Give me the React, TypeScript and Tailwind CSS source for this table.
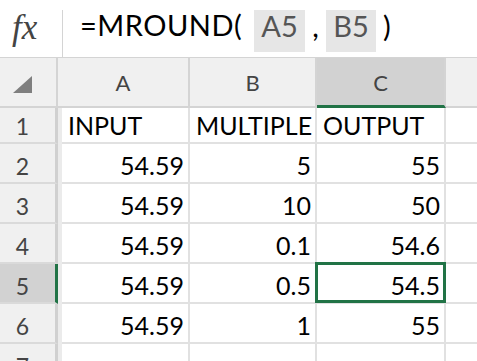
import React from "react";

const G = "border-[#e1e1e1]";

function RowHead({ n, sel }: { n: number; sel?: boolean }) {
  return (
    <div
      className={
        "w-[58px] shrink-0 flex items-end justify-center pr-[10px] pb-[4px] leading-none text-[23px] text-[#444] border-b-2 border-b-[#dadada] border-r-[3px] " +
        (sel ? "bg-[#d2d2d2] border-r-[#217346]" : "bg-[#f0f0f0] border-r-[#d0d0d0]")
      }
    >
      {n}
    </div>
  );
}

function Cell({ w, v, left, children }: { w: string; v?: string; left?: boolean; children?: React.ReactNode }) {
  return (
    <div
      className={
        "relative shrink-0 flex items-end leading-none text-[25px] text-black pb-[4px] border-r-2 border-b-2 " +
        G +
        " " +
        w +
        (left ? " justify-start pl-[6px]" : " justify-end pr-[4px]")
      }
    >
      {v}
      {children}
    </div>
  );
}

const rows: [number, string, string, string, boolean][] = [
  [2, "54.59", "5", "55", false],
  [3, "54.59", "10", "50", false],
  [4, "54.59", "0.1", "54.6", false],
  [5, "54.59", "0.5", "54.5", true],
  [6, "54.59", "1", "55", false],
];

export default function App() {
  return (
    <div className="w-[477px] h-[361px] overflow-hidden bg-white font-['Lato',sans-serif]">
      {/* formula bar */}
      <div className="flex h-[58px] border-b border-[#d4d4d4]">
        <div className="w-[62px] shrink-0 pl-[12px] pt-[11px] font-['Liberation_Serif',serif] italic text-[35px] leading-[34px] text-[#444]">
          fx
        </div>
        <div className="w-px bg-[#d4d4d4] mt-[10px]" />
        <div className="flex items-start pt-[10px] pl-[17px] text-[29px] text-black">
          <span className="w-[174px] leading-[30px] shrink-0 tracking-[0.5px]">=MROUND(</span>
          <span className="w-[51px] h-[42px] bg-[#e6e6e6] text-[#555] leading-[32px] flex justify-center shrink-0">A5</span>
          <span className="w-[21px] leading-[32px] flex justify-center shrink-0">,</span>
          <span className="w-[50px] h-[42px] bg-[#e6e6e6] text-[#555] leading-[32px] flex justify-center shrink-0">B5</span>
          <span className="ml-[7px] leading-[32px]">)</span>
        </div>
      </div>

      {/* column headers */}
      <div className="flex h-[50px] text-[22px] leading-none text-[#444]">
        <div className="w-[58px] shrink-0 bg-[#f0f0f0] border-r-2 border-b-2 border-[#d4d4d4] flex items-start pl-[13px] pt-[18px]">
          <svg width="19" height="17" viewBox="0 0 19 17">
            <polygon points="19,0 19,17 0,17" fill="#7f7f7f" />
          </svg>
        </div>
        <div className="w-[132px] shrink-0 bg-[#f0f0f0] border-r-2 border-b-2 border-[#d4d4d4] flex items-end justify-center pb-[12px]">
          A
        </div>
        <div className="w-[127px] shrink-0 bg-[#f0f0f0] border-r-2 border-b-2 border-[#d4d4d4] flex items-end justify-center pb-[12px]">
          B
        </div>
        <div className="w-[129px] shrink-0 bg-[#d2d2d2] border-r-2 border-r-[#d4d4d4] border-b-[3px] border-b-[#217346] flex items-end justify-center pb-[11px]">
          C
        </div>
        <div className="flex-1 bg-[#f0f0f0] border-b-2 border-[#d4d4d4]" />
      </div>

      {/* row 1 */}
      <div className="flex h-[36px]">
        <RowHead n={1} />
        <div className="w-[4px] shrink-0 bg-[#ebebeb]" />
        <Cell w="w-[128px]" v="INPUT" left />
        <Cell w="w-[127px]" v="MULTIPLE" left />
        <Cell w="w-[129px]" v="OUTPUT" left />
        <div className={"flex-1 border-b-2 " + G} />
      </div>

      {rows.map(([n, a, b, c, sel]) => (
        <div key={n} className="flex h-[40px]">
          <RowHead n={n} sel={sel} />
          <div className="w-[4px] shrink-0 bg-[#ebebeb]" />
          <Cell w="w-[128px]" v={a} />
          <Cell w="w-[127px]" v={b} />
          <Cell w="w-[129px]" v={c}>
            {sel && (
              <div className="absolute -left-[2px] -top-[2px] -right-[2px] -bottom-[1px] border-[3px] border-[#217346]" />
            )}
          </Cell>
          <div className={"flex-1 border-b-2 " + G} />
        </div>
      ))}

      {/* row 7 (cut off at the bottom edge, as in the reference) */}
      <div className="flex h-[40px]">
        <RowHead n={7} />
        <div className="w-[4px] shrink-0 bg-[#ebebeb]" />
        <Cell w="w-[128px]" />
        <Cell w="w-[127px]" />
        <Cell w="w-[129px]" />
        <div className="flex-1" />
      </div>
    </div>
  );
}
